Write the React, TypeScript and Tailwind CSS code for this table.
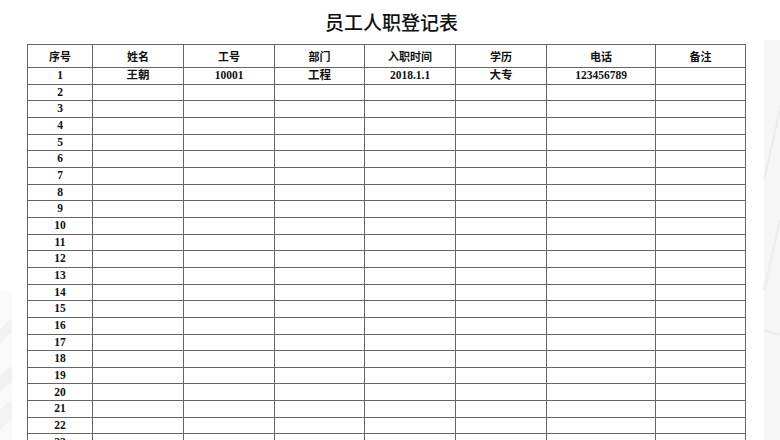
import React from "react";

const headers = ["序号", "姓名", "工号", "部门", "入职时间", "学历", "电话", "备注"];
const widths = [65, 91, 91, 90, 91, 91, 109, 90];

export default function App() {
  const rows: string[][] = [];
  rows.push(["1", "王朝", "10001", "工程", "2018.1.1", "大专", "123456789", ""]);
  for (let i = 2; i <= 26; i++) rows.push([String(i), "", "", "", "", "", "", ""]);

  return (
    <div className="relative w-[780px] h-[440px] overflow-hidden bg-white">
      <svg className="absolute inset-0" width="780" height="440" viewBox="0 0 780 440">
        <rect x="764" y="40" width="16" height="400" fill="#f6f6f6" />
        <path d="M764 180 L780 110" stroke="#ececec" strokeWidth="2" fill="none" />
        <path d="M764 290 L780 220" stroke="#eeeeee" strokeWidth="2" fill="none" />
        <path d="M764 330 L780 335" stroke="#ececec" strokeWidth="2" fill="none" />
        <path d="M0 330 Q8 320 12 318 L12 332 Q6 336 0 345 Z" fill="#ececec" />
        <path d="M0 375 Q8 368 12 366 L12 382 Q6 386 0 392 Z" fill="#e8e8e8" />
        <path d="M0 410 Q8 402 12 400 L12 420 Q6 424 0 430 Z" fill="#eeeeee" />
        <rect x="0" y="290" width="12" height="150" fill="#f7f7f7" opacity="0.6" />
      </svg>
      <div className="relative flex flex-col items-center">
        <div
          className="h-[44px] pt-[8px] text-[19px] leading-[28px] text-[#111] font-medium ml-[3px]"
          style={{ fontFamily: '"Noto Sans CJK SC", sans-serif' }}
        >
          员工人职登记表
        </div>
      </div>
      <div className="relative pl-[27px]">
        <table
          className="border-collapse table-fixed"
          style={{ fontFamily: '"Liberation Serif", "Noto Sans CJK SC", serif' }}
        >
          <colgroup>
            {widths.map((w, i) => (
              <col key={i} style={{ width: w }} />
            ))}
          </colgroup>
          <thead>
            <tr className="h-[23px]">
              {headers.map((h) => (
                <th
                  key={h}
                  className="border border-[#666] p-0 text-[11px] font-bold text-[#111] text-center align-middle leading-none"
                  style={{ fontFamily: '"Noto Sans CJK SC", sans-serif' }}
                >
                  {h}
                </th>
              ))}
            </tr>
          </thead>
          <tbody>
            {rows.map((r, ri) => (
              <tr key={ri} className="h-[16.67px]">
                {r.map((c, ci) => (
                  <td
                    key={ci}
                    className="border border-[#666] p-0 text-[11.5px] font-bold text-[#111] text-center align-middle leading-none"
                  >
                    {c}
                  </td>
                ))}
              </tr>
            ))}
          </tbody>
        </table>
      </div>
    </div>
  );
}
